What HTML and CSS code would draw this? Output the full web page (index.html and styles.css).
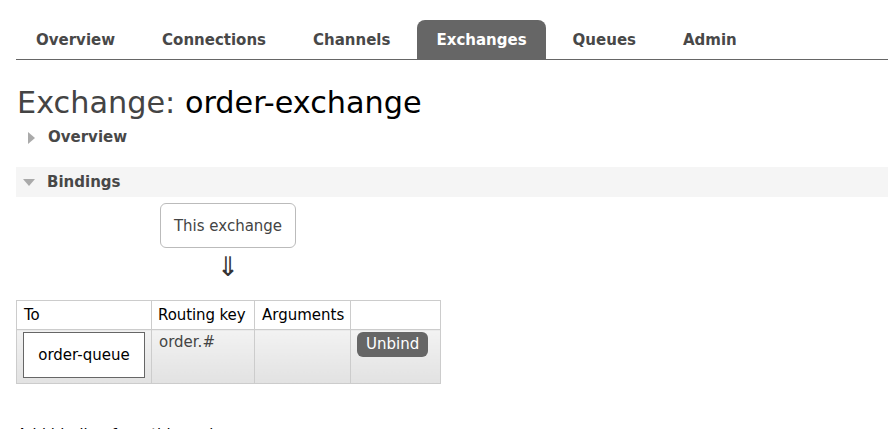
FILE: index.html
```html
<!DOCTYPE html>
<html>
<head>
<meta charset="utf-8">
<link rel="stylesheet" href="styles.css">
</head>
<body>
<ul class="tabs">
  <li class="tab">Overview</li>
  <li class="tab">Connections</li>
  <li class="tab">Channels</li>
  <li class="tab active">Exchanges</li>
  <li class="tab">Queues</li>
  <li class="tab">Admin</li>
</ul>
<h1 class="title"><span class="title-label">Exchange:</span> order-exchange</h1>
<div class="section">
  <span class="tri tri-right"></span><span class="section-name">Overview</span>
</div>
<div class="section section-open">
  <span class="tri tri-down"></span><span class="section-name">Bindings</span>
</div>
<div class="source">
  <div class="source-box">This exchange</div>
  <div class="arrow">&#8659;</div>
</div>
<table class="bindings">
  <colgroup>
    <col class="w-to"><col class="w-key"><col class="w-args"><col class="w-act">
  </colgroup>
  <tr class="head">
    <th>To</th>
    <th>Routing key</th>
    <th>Arguments</th>
    <th></th>
  </tr>
  <tr class="row">
    <td class="c-to"><div class="queue-box">order-queue</div></td>
    <td class="c-key"><span class="key">order.#</span></td>
    <td class="c-args"></td>
    <td class="c-act"><span class="btn">Unbind</span></td>
  </tr>
</table>
<p class="add">Add binding from this exchange</p>
</body>
</html>
```
FILE: styles.css
```css
html, body {
  margin: 0;
  background: #fff;
}
body {
  padding: 20px 0 0 16px;
  font-family: "DejaVu Sans", Verdana, sans-serif;
  color: #000;
  overflow: hidden;
  height: 409px;
}
.tabs {
  display: flex;
  list-style: none;
  margin: 0;
  padding: 0;
  border-bottom: 1px solid #666;
  height: 39px;
}
.tab {
  padding: 1px 20px 0;
  margin-right: 7px;
  line-height: 38px;
  font-size: 15px;
  font-weight: bold;
  color: #484848;
  border-radius: 8px 8px 0 0;
  white-space: nowrap;
}
.tab.active {
  background: #666;
  color: #fff;
  padding: 1px 19px 0;
}
.title {
  margin: 26px 0 0 1px;
  font-size: 30.3px;
  font-weight: normal;
  line-height: 34px;
  color: #000;
}
.title-label {
  color: #444;
}
.section {
  display: flex;
  align-items: center;
  height: 30px;
}
.title + .section {
  padding-top: 3px;
  height: 27px;
}
.section-open {
  background: #f5f5f5;
  margin-top: 17px;
}
.section-name {
  font-size: 15px;
  font-weight: bold;
  color: #484848;
}
.tri {
  width: 0;
  height: 0;
  display: inline-block;
}
.tri-right {
  margin: 2px 13px 0 12px;
  border-top: 6px solid transparent;
  border-bottom: 6px solid transparent;
  border-left: 7px solid #aaa;
}
.tri-down {
  margin: 0 12px 0 7px;
  border-left: 6px solid transparent;
  border-right: 6px solid transparent;
  border-top: 7px solid #aaa;
}
.source {
  margin-left: 144px;
  width: 136px;
  display: flex;
  flex-direction: column;
  align-items: center;
  padding-top: 6px;
}
.source-box {
  box-sizing: border-box;
  width: 136px;
  height: 45px;
  border: 1px solid #bbb;
  border-radius: 6px;
  display: flex;
  align-items: center;
  justify-content: center;
  font-size: 15px;
  color: #444;
}
.arrow {
  font-size: 27px;
  line-height: 38px;
  color: #333;
}
.bindings {
  margin-top: 14px;
  border-collapse: collapse;
  table-layout: fixed;
  width: 425px;
  font-size: 15px;
  white-space: nowrap;
}
.w-to { width: 135px; }
.w-key { width: 103px; }
.w-args { width: 96px; }
.w-act { width: 90px; }
.bindings th, .bindings td {
  box-sizing: border-box;
  border: 1px solid #ccc;
  padding: 0;
  vertical-align: top;
  text-align: left;
  overflow: visible;
}
.head th {
  font-weight: normal;
  height: 29px;
  padding: 0 7px;
  vertical-align: middle;
}
.head th:nth-child(2) {
  padding: 0 6px;
  letter-spacing: -0.1px;
}
.row td {
  background: linear-gradient(#f2f2f2, #e2e2e2);
  height: 54px;
}
.row .c-to { padding: 2px 6px; }
.queue-box {
  box-sizing: border-box;
  width: 122px;
  height: 46px;
  background: #fff;
  border: 1px solid #666;
  display: flex;
  align-items: center;
  justify-content: center;
  font-size: 15px;
}
.row .c-key { padding: 3px 7px; color: #444; }
.row .c-act { padding: 2px 6px; }
.btn {
  display: inline-block;
  background: #666;
  color: #fff;
  border-radius: 6px;
  padding: 0 9px;
  line-height: 25px;
  font-size: 15px;
}
.add {
  margin: 42px 0 0 1px;
  font-size: 15px;
}
```
